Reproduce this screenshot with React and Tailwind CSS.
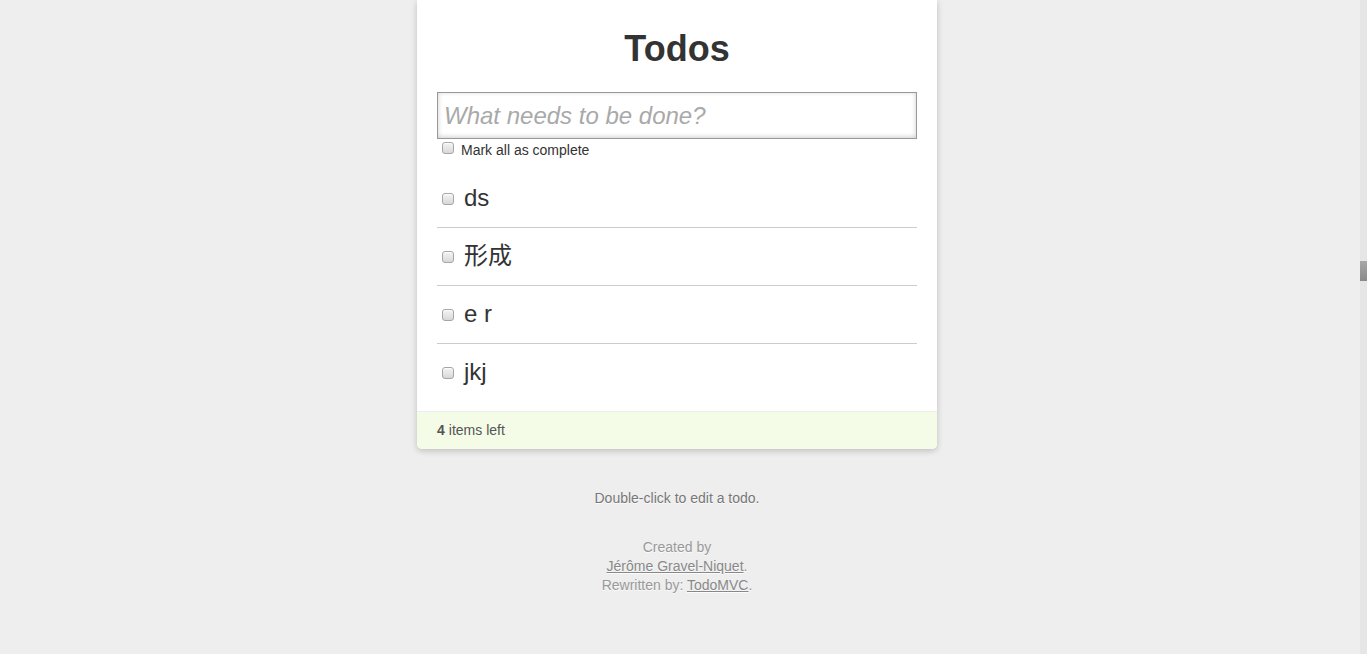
import React from "react";

function Box() {
  return (
    <span className="block w-[12px] h-[12px] shrink-0 rounded-[3px] border border-[#a6a6a6] bg-gradient-to-b from-[#f4f4f4] to-[#d8d8d8] shadow-[inset_0_1px_0_rgba(255,255,255,0.8)]" />
  );
}

const todos = ["ds", "形成", "e r", "jkj"];

export default function App() {
  return (
    <div
      className="flex w-[1367px] h-[654px] overflow-hidden bg-[#eeeeee] text-[14px] leading-[19.6px] text-[#333]"
      style={{ fontFamily: '"Liberation Sans", Arial, "Noto Sans CJK SC", sans-serif' }}
    >
      <div className="flex-1 flex flex-col">
        <div className="ml-[417px] w-[520px] bg-white px-[20px] rounded-b-[5px] shadow-[0_2px_6px_rgba(0,0,0,0.2)]">
          <h1 className="pt-[25px] pb-[19px] text-center text-[36px] leading-[48px] font-bold text-[#333]">
            Todos
          </h1>
          <div className="h-[47px] border border-[#999] shadow-[inset_0_-1px_5px_rgba(0,0,0,0.2)] px-[6px] flex items-center">
            <span className="italic text-[24px] leading-[33px] text-[#a9a9a9]">What needs to be done?</span>
          </div>
          <div className="flex items-start h-[31px]">
            <span className="ml-[5px] mt-[3px]"><Box /></span>
            <span className="ml-[7px] mt-[2px] text-[14px] leading-[19px] text-[#333]">Mark all as complete</span>
          </div>
          <ul>
            {todos.map((t, i) => (
              <li
                key={t}
                className={`flex items-center ${i < todos.length - 1 ? "h-[58px] border-b border-[#cccccc]" : "h-[57px]"}`}
              >
                <span className="ml-[5px] mt-[1px]"><Box /></span>
                <span className="ml-[10px] mb-[2px] text-[24px] leading-[28px] text-[#333]">{t}</span>
              </li>
            ))}
          </ul>
          <div className="mt-[10px] -mx-[20px] px-[20px] bg-[#f4fce8] border-t border-[#eeeeee] rounded-b-[5px] h-[38px] flex items-center text-[14px] text-[#555]">
            <span className="font-bold mr-[4px]">4</span>
            <span>items left</span>
          </div>
        </div>
        <p className="mt-[40px] ml-[417px] w-[520px] text-center text-[#777] [text-shadow:0_1px_0_rgba(255,255,255,0.8)]">
          Double-click to edit a todo.
        </p>
        <div className="mt-[29px] ml-[417px] w-[520px] text-center text-[#999] leading-[19px] [text-shadow:0_1px_0_rgba(255,255,255,0.8)]">
          <div>Created by</div>
          <div>
            <a className="underline text-[#888]">Jérôme Gravel-Niquet</a>.
          </div>
          <div>
            Rewritten by: <a className="underline text-[#888]">TodoMVC</a>.
          </div>
        </div>
      </div>
      <div className="w-[7px] h-full bg-[#e6e6e6] flex flex-col">
        <div className="h-[261px]" />
        <div className="h-[20px] bg-gradient-to-b from-[#a8a8a8] to-[#8a8a8a]" />
      </div>
    </div>
  );
}
